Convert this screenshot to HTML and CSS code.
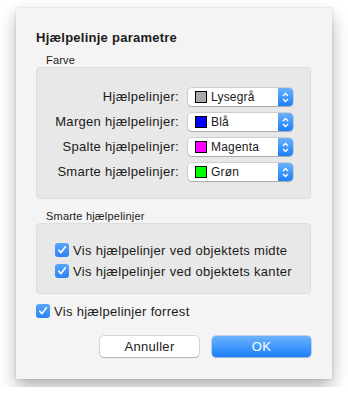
FILE: index.html
```html
<!DOCTYPE html>
<html>

<head>
    <title>Hjælpelinje parametre</title>
    <link rel="stylesheet" href="styles.css">
</head>

<body>
    <div class="window">
        <h1 class="title">Hjælpelinje parametre</h1>

        <div class="group-label">Farve</div>
        <div class="group colors">
            <label class="row-label">Hjælpelinjer:</label>
            <div class="popup"><span class="swatch" style="background: #a9a9a9"></span><span class="popup-text">Lysegrå</span><span class="stepper"><svg width="7" height="11" viewBox="0 0 7 11"><path d="M1 4 L3.5 1.5 L6 4 M1 7 L3.5 9.5 L6 7" fill="none" stroke="#fff" stroke-width="1.3"/></svg></span></div>

            <label class="row-label">Margen hjælpelinjer:</label>
            <div class="popup"><span class="swatch" style="background: #0000ff"></span><span class="popup-text">Blå</span><span class="stepper"><svg width="7" height="11" viewBox="0 0 7 11"><path d="M1 4 L3.5 1.5 L6 4 M1 7 L3.5 9.5 L6 7" fill="none" stroke="#fff" stroke-width="1.3"/></svg></span></div>

            <label class="row-label">Spalte hjælpelinjer:</label>
            <div class="popup"><span class="swatch" style="background: #ff00ff"></span><span class="popup-text">Magenta</span><span class="stepper"><svg width="7" height="11" viewBox="0 0 7 11"><path d="M1 4 L3.5 1.5 L6 4 M1 7 L3.5 9.5 L6 7" fill="none" stroke="#fff" stroke-width="1.3"/></svg></span></div>

            <label class="row-label">Smarte hjælpelinjer:</label>
            <div class="popup"><span class="swatch" style="background: #00ff00"></span><span class="popup-text">Grøn</span><span class="stepper"><svg width="7" height="11" viewBox="0 0 7 11"><path d="M1 4 L3.5 1.5 L6 4 M1 7 L3.5 9.5 L6 7" fill="none" stroke="#fff" stroke-width="1.3"/></svg></span></div>
        </div>

        <div class="group-label">Smarte hjælpelinjer</div>
        <div class="group smart">
            <div class="check-row"><span class="checkbox"><svg width="10" height="10" viewBox="0 0 10 10"><path d="M1.8 5.2 L4 7.6 L8.4 1.8" fill="none" stroke="#fff" stroke-width="1.6" stroke-linecap="round" stroke-linejoin="round"/></svg></span>Vis hjælpelinjer ved objektets midte</div>
            <div class="check-row"><span class="checkbox"><svg width="10" height="10" viewBox="0 0 10 10"><path d="M1.8 5.2 L4 7.6 L8.4 1.8" fill="none" stroke="#fff" stroke-width="1.6" stroke-linecap="round" stroke-linejoin="round"/></svg></span>Vis hjælpelinjer ved objektets kanter</div>
        </div>

        <div class="check-row front"><span class="checkbox"><svg width="10" height="10" viewBox="0 0 10 10"><path d="M1.8 5.2 L4 7.6 L8.4 1.8" fill="none" stroke="#fff" stroke-width="1.6" stroke-linecap="round" stroke-linejoin="round"/></svg></span>Vis hjælpelinjer forrest</div>

        <div class="buttons">
            <a class="button">Annuller</a>
            <a class="button default">OK</a>
        </div>
    </div>
</body>

</html>
```

FILE: styles.css
```css
:root {
    --window-bg: #f4f4f4;
    --group-bg: #e8e8e8;
    --group-border: #dedede;
    --blue-top: #6bb1fb;
    --blue-bottom: #1b7ffa;
    --text-color: #1a1a1a;
}

body {
    margin: 0;
    background: #fff;
    font-family: 'Liberation Sans', Arial, sans-serif;
    font-size: 13px;
    letter-spacing: 0.3px;
    color: var(--text-color);
}

.window {
    box-sizing: border-box;
    width: 316px;
    height: 371px;
    margin: 8px 16px;
    padding: 22px 21px 0 20px;
    background: var(--window-bg);
    box-shadow: 0 8px 16px rgba(0, 0, 0, 0.3), 0 0 2px rgba(0, 0, 0, 0.15);
}

.title {
    margin: 0;
    font-size: 13px;
    line-height: 16px;
    font-weight: bold;
    letter-spacing: 0.25px;
}

.group-label {
    margin: 7px 0 0 10px;
    font-size: 11px;
    line-height: 14px;
    letter-spacing: 0.2px;
}

.group {
    background: var(--group-bg);
    border: 1px solid var(--group-border);
    border-radius: 4px;
}

.colors {
    box-sizing: border-box;
    height: 132px;
    display: grid;
    grid-template-columns: 1fr 105px;
    column-gap: 9px;
    row-gap: 7px;
    align-content: start;
    padding: 20px 17px 0 0;
}

.row-label {
    text-align: right;
    line-height: 18px;
}

.popup {
    box-sizing: border-box;
    height: 18px;
    display: flex;
    align-items: center;
    background: #fff;
    border-radius: 4px;
    box-shadow: 0 0 0 0.5px rgba(0, 0, 0, 0.22), 0 1px 1px rgba(0, 0, 0, 0.18);
    overflow: hidden;
    font-size: 12px;
    letter-spacing: 0.2px;
}

.swatch {
    box-sizing: border-box;
    width: 12px;
    height: 12px;
    margin: 0 4px 0 7px;
    border: 1px solid #000;
}

.popup-text {
    flex: 1;
}

.stepper {
    width: 15px;
    height: 100%;
    display: flex;
    align-items: center;
    justify-content: center;
    background: linear-gradient(var(--blue-top), var(--blue-bottom));
}

.colors + .group-label {
    margin-top: 10px;
}

.smart {
    box-sizing: border-box;
    height: 71px;
    padding: 17px 0 0 18px;
}

.check-row {
    display: flex;
    align-items: center;
    height: 18px;
    margin-bottom: 3px;
    white-space: nowrap;
}

.checkbox {
    box-sizing: border-box;
    width: 14px;
    height: 14px;
    margin-right: 4px;
    display: flex;
    align-items: center;
    justify-content: center;
    border-radius: 3px;
    background: linear-gradient(#5aa6fb, #2d82f6);
}

.front {
    margin-top: 8px;
}

.buttons {
    display: flex;
    justify-content: flex-end;
    gap: 13px;
    margin-top: 16px;
}

.button {
    box-sizing: border-box;
    width: 99px;
    height: 21px;
    line-height: 21px;
    text-align: center;
    border-radius: 4px;
    background: #fff;
    box-shadow: 0 0 0 0.5px rgba(0, 0, 0, 0.25), 0 1px 1px rgba(0, 0, 0, 0.15);
    cursor: pointer;
    user-select: none;
}

.default {
    color: #fff;
    background: linear-gradient(#6cb3fa, #1a7ffb);
    box-shadow: 0 0 0 0.5px rgba(0, 60, 200, 0.4), 0 1px 1px rgba(0, 0, 0, 0.15);
}
```
